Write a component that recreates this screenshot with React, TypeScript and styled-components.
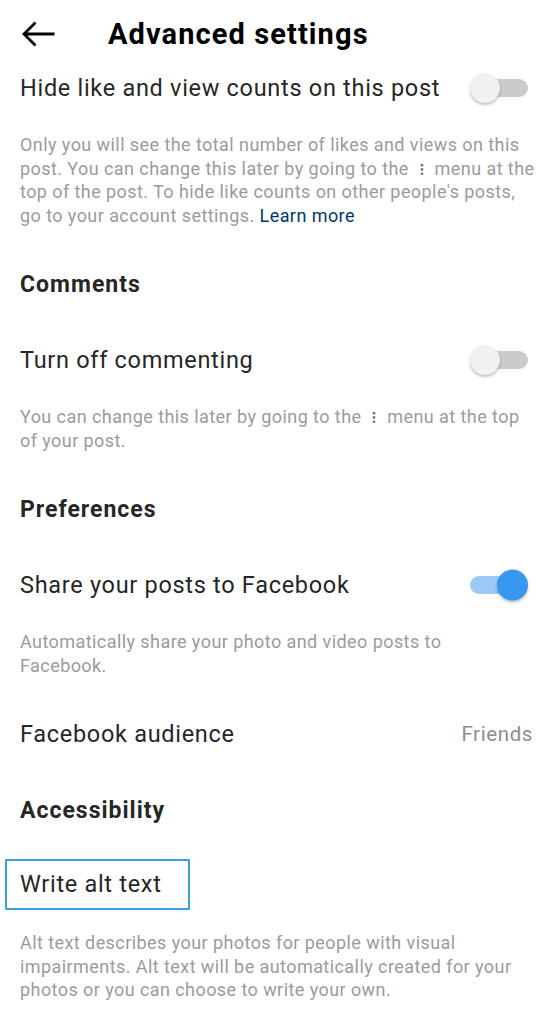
import React from "react";
import styled, { createGlobalStyle } from "styled-components";

const GlobalStyle = createGlobalStyle`
  html, body {
    margin: 0;
    padding: 0;
    background: #ffffff;
  }
  body {
    font-family: Roboto, "Noto Sans", "Liberation Sans", sans-serif;
    -webkit-font-smoothing: antialiased;
  }
`;

const Screen = styled.div`
  width: 556px;
  min-height: 1024px;
  background: #ffffff;
  overflow: hidden;
`;

const Header = styled.header`
  height: 50px;
  padding-top: 18px;
  box-sizing: border-box;
  display: flex;
  align-items: flex-start;
`;

const HeaderInner = styled.div`
  height: 32px;
  display: flex;
  align-items: center;
  gap: 52px;
  padding-left: 21px;
`;

const BackButton = styled.button`
  border: 0;
  background: none;
  padding: 0;
  width: 35px;
  height: 28px;
  display: flex;
  align-items: center;
  color: #000;
`;

const Title = styled.h1`
  margin: 0;
  font-size: 29px;
  font-weight: 700;
  color: #000;
  letter-spacing: 1.1px;
`;

const Row = styled.div`
  height: 76px;
  padding: 0 28px 0 20px;
  display: flex;
  align-items: center;
  justify-content: space-between;
`;

const RowLabel = styled.span`
  font-size: 23.5px;
  color: #262626;
  letter-spacing: 0.7px;
  white-space: nowrap;
`;

const RowValue = styled.span`
  font-size: 20.5px;
  color: #8e8e8e;
  margin-right: -5px;
  letter-spacing: 0.6px;
`;

const Highlight = styled.span`
  display: inline-flex;
  align-items: center;
  height: 51px;
  box-sizing: border-box;
  margin-left: -15px;
  margin-top: -4px;
  padding: 0 26px 0 13px;
  border: 2px solid #3aa0e6;
  border-radius: 1px;
`;

const SectionTitle = styled.h2`
  margin: 0;
  height: 76px;
  padding: 0 20px;
  display: flex;
  align-items: center;
  font-size: 23px;
  font-weight: 700;
  color: #262626;
  letter-spacing: 1px;
`;

const Description = styled.p`
  margin: 0;
  padding: 7px 0 19px 20px;
  font-size: 18px;
  line-height: 23.5px;
  color: #9b9b9b;
  letter-spacing: 0.43px;
  white-space: nowrap;
`;

const Link = styled.a`
  color: #00376b;
  text-decoration: none;
`;

const Track = styled.div<{ $on: boolean }>`
  position: relative;
  width: 48px;
  height: 18px;
  border-radius: 9px;
  background: ${(p) => (p.$on ? "#9ccaf6" : "#cbcbcb")};
  margin-right: ${(p) => (p.$on ? "10px" : "0")};
`;

const Thumb = styled.div<{ $on: boolean }>`
  position: absolute;
  top: 50%;
  width: ${(p) => (p.$on ? "31px" : "30px")};
  height: ${(p) => (p.$on ? "31px" : "30px")};
  border-radius: 50%;
  transform: translateY(-50%);
  left: ${(p) => (p.$on ? "27px" : "-10px")};
  background: ${(p) => (p.$on ? "#3897f0" : "#f1f1f1")};
  box-shadow: 0 2px 3px rgba(0, 0, 0, 0.25);
`;

const Toggle: React.FC<{ on?: boolean }> = ({ on = false }) => (
  <Track $on={on}>
    <Thumb $on={on} />
  </Track>
);

const Kebab: React.FC = () => (
  <svg
    width="12"
    height="13"
    viewBox="0 0 12 13"
    style={{ verticalAlign: "-1px", margin: "0 2px" }}
  >
    <circle cx="6" cy="2.2" r="1.4" fill="#7a7a7a" />
    <circle cx="6" cy="6.5" r="1.4" fill="#7a7a7a" />
    <circle cx="6" cy="10.8" r="1.4" fill="#7a7a7a" />
  </svg>
);

const BackArrow: React.FC = () => (
  <svg width="35" height="28" viewBox="0 0 35 28" fill="none">
    <path
      d="M33.5 14H3M14.5 2.5L3 14l11.5 11.5"
      stroke="#000"
      strokeWidth="2.8"
      strokeLinecap="butt"
      strokeLinejoin="miter"
    />
  </svg>
);

const App: React.FC = () => {
  return (
    <Screen>
      <GlobalStyle />
      <Header>
        <HeaderInner>
          <BackButton aria-label="Back">
            <BackArrow />
          </BackButton>
          <Title>Advanced settings</Title>
        </HeaderInner>
      </Header>

      <Row>
        <RowLabel>Hide like and view counts on this post</RowLabel>
        <Toggle />
      </Row>
      <Description>
        Only you will see the total number of likes and views on this
        <br />
        post. You can change this later by going to the <Kebab /> menu at the
        <br />
        top of the post. To hide like counts on other people's posts,
        <br />
        go to your account settings. <Link href="#">Learn more</Link>
      </Description>

      <SectionTitle>Comments</SectionTitle>
      <Row>
        <RowLabel>Turn off commenting</RowLabel>
        <Toggle />
      </Row>
      <Description>
        You can change this later by going to the <Kebab /> menu at the top
        <br />
        of your post.
      </Description>

      <SectionTitle>Preferences</SectionTitle>
      <Row>
        <RowLabel>Share your posts to Facebook</RowLabel>
        <Toggle on />
      </Row>
      <Description>
        Automatically share your photo and video posts to
        <br />
        Facebook.
      </Description>

      <Row>
        <RowLabel>Facebook audience</RowLabel>
        <RowValue>Friends</RowValue>
      </Row>

      <SectionTitle>Accessibility</SectionTitle>
      <Row>
        <Highlight>
          <RowLabel>Write alt text</RowLabel>
        </Highlight>
      </Row>
      <Description>
        Alt text describes your photos for people with visual
        <br />
        impairments. Alt text will be automatically created for your
        <br />
        photos or you can choose to write your own.
      </Description>
    </Screen>
  );
};

export default App;
